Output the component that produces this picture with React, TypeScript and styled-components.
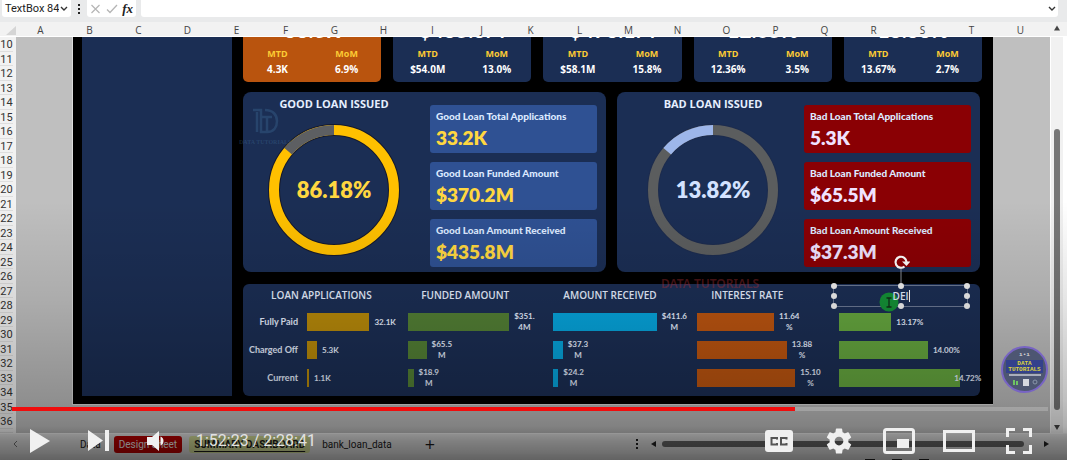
import React from "react";
import styled, { createGlobalStyle } from "styled-components";

const GlobalStyle = createGlobalStyle`
  * { box-sizing: border-box; }
  body { margin: 0; background: #fff; font-family: "Open Sans", "Noto Sans", sans-serif; }
  button { border: 0; padding: 0; background: none; font: inherit; color: inherit; cursor: pointer; }
  input { border: 0; padding: 0; background: none; font: inherit; color: inherit; outline: 0; min-width: 0; }
`;

const Page = styled.main`
  position: relative;
  display: flex;
  flex-direction: column;
  min-height: 100vh;
  overflow: hidden;
  background: #efefef;
`;

/* ---------- formula bar ---------- */

const FormulaBar = styled.header`
  display: flex;
  align-items: stretch;
  height: 22px;
  padding: 0 9px 5px 2px;
  background: #e9eaeb;
  color: #222;
  font-size: 11px;
`;

const NameBox = styled.label`
  display: flex;
  align-items: center;
  justify-content: space-between;
  width: 69px;
  padding: 0 3px;
  background: #fff;
  border-radius: 0 0 3px 3px;
  input { width: 54px; font: 400 11px/16px Roboto, sans-serif; }
`;

const Dots = styled.span`
  display: flex;
  align-items: center;
  justify-content: center;
  width: 16px;
`;

const FxGroup = styled.div`
  display: flex;
  align-items: center;
  justify-content: space-between;
  width: 49px;
  margin-right: 5px;
  padding: 0 3px;
  background: #fff;
  border-radius: 0 0 3px 3px;
  button { display: flex; }
`;

const FxButton = styled.button`
  && { font: italic bold 13px/16px "Liberation Serif", serif; }
`;

const FormulaField = styled.div`
  display: flex;
  flex: 1;
  align-items: center;
  padding-right: 2px;
  background: #fff;
  border-radius: 0 0 3px 3px;
  input { flex: 1; }
  button { display: flex; }
`;

/* ---------- sheet ---------- */

const ColumnHeads = styled.div`
  display: grid;
  grid-template-columns: 16px 1fr 22px;
  height: 15px;
  background: #f2f2f2;
  border-bottom: 1px solid #fff;
`;

const Corner = styled.svg`
  margin: 4px 0 0 6px;
`;

const Letters = styled.div`
  display: grid;
  grid-template-columns: repeat(21, 1fr);
  color: #444;
  font-size: 10px;
  line-height: 16px;
  text-align: center;
`;

const SheetBody = styled.div`
  display: flex;
  flex: 1;
`;

const RowHeads = styled.div`
  display: flex;
  flex-direction: column;
  width: 16px;
  padding-right: 3px;
  background: #f2f2f2;
  color: #333;
  font: 400 11px/15px Roboto, sans-serif;
  text-align: center;
`;

const RowHead = styled.div<{ $partial?: boolean }>`
  flex: ${(p) => (p.$partial ? 1 : 4)} 1 0;
  min-height: 0;
  overflow: hidden;
  border-bottom: 1px solid #dedede;
`;

const Cells = styled.div`
  flex: 1;
  min-width: 0;
  padding: 0 57px 28px 56px;
  background: #bfbfbf;
`;

const ScrollRail = styled.div`
  display: flex;
  flex-direction: column;
  align-items: center;
  justify-content: flex-end;
  width: 17px;
  padding: 0 0 3px;
  border-right: 4px solid #fff;
  border-left: 1px solid #fff;
  background: #f1f1f1;
`;

const ScrollThumb = styled.div`
  flex: 1;
  width: 6px;
  margin: 92px 0 14px;
  border-radius: 3px;
  background: #777;
`;

/* ---------- dashboard ---------- */

const Dashboard = styled.section`
  display: grid;
  grid-template-columns: 150px 1fr;
  gap: 11px;
  padding: 0 11px 8px 9px;
  border: solid #dcdcdc;
  border-width: 0 0 1px 1px;
  background: #000;
  color: #e6efff;
`;

const SidePanel = styled.aside`
  background: #1b2e54;
`;

const Content = styled.div`
  display: flex;
  flex-direction: column;
  gap: 11px;
  min-width: 0;
`;

const KpiRow = styled.div`
  display: grid;
  grid-template-columns: repeat(5, 1fr);
  gap: 12px;
`;

const KpiCard = styled.article<{ $active?: boolean }>`
  padding-bottom: 4px;
  border-radius: 0 0 5px 5px;
  background: ${(p) => (p.$active ? "#b9540e" : "#1b2e54")};
`;

const KpiTotal = styled.div`
  display: flex;
  align-items: flex-end;
  justify-content: center;
  height: 5px;
  overflow: hidden;
  font: bold 21px/25px Lato, sans-serif;
  color: #fff;
`;

const KpiPair = styled.dl`
  display: grid;
  grid-template-columns: 1fr 1fr;
  margin: 5px 0 0;
  text-align: center;
  dt { color: #fccb34; font-size: 9px; font-weight: 700; line-height: 14px; }
  dd { margin: 0; color: #fff; font-size: 10px; font-weight: 700; line-height: 17px; }
`;

const LoanRow = styled.div`
  display: grid;
  grid-template-columns: 1fr 1fr;
  gap: 11px;
  margin-top: -1px;
  padding-right: 2px;
`;

const LoanPanel = styled.article`
  position: relative;
  display: flex;
  justify-content: space-between;
  padding: 0 9px 5px 0;
  border-radius: 8px;
  background: #1b2e54;
`;

const LoanChart = styled.div<{ $left: number; $right: number }>`
  display: flex;
  flex: 1;
  flex-direction: column;
  align-items: center;
  padding: 3px ${(p) => p.$right}px 0 ${(p) => p.$left}px;
`;

const LoanTitle = styled.h2`
  margin: 0 0 12px;
  font: 700 11px/17px "Open Sans", sans-serif;
  white-space: nowrap;
`;

const Ring = styled.div`
  display: grid;
  place-items: center;
  svg, strong { grid-area: 1 / 1; }
`;

const RingValue = styled.strong<{ $color: string }>`
  color: ${(p) => p.$color};
  font: 800 22px/26px Lato, sans-serif;
`;

const Facts = styled.div`
  display: flex;
  flex-direction: column;
  gap: 9px;
  width: 167px;
  padding-top: 13px;
`;

const Fact = styled.div<{ $bad?: boolean }>`
  height: 48px;
  padding: 2px 6px;
  border-radius: 3px;
  background: ${(p) => (p.$bad ? "#8a0004" : "#2f5193")};
  color: ${(p) => (p.$bad ? "#f0e2ff" : "#ffd740")};
  font: 800 19px/25px Lato, sans-serif;
`;

const FactLabel = styled.div`
  color: #dce9ff;
  font: 900 10px/18px Lato, sans-serif;
  white-space: nowrap;
`;

const Breakdown = styled.article`
  position: relative;
  display: grid;
  grid-template-columns: 165fr 145fr 145fr 142fr 141fr;
  margin: 1px 2px 0 0;
  padding-bottom: 4px;
  border-radius: 6px;
  background: #1b2e54;
`;

const BarChart = styled.div<{ $labelled?: boolean }>`
  position: relative;
  min-width: 0;
  padding-left: ${(p) => (p.$labelled ? 64 : 0)}px;
`;

const BarTitle = styled.h3<{ $left: number; $right: number }>`
  height: 24px;
  margin: 0 ${(p) => p.$right}px 0 ${(p) => p.$left}px;
  font: 600 10px/23px "Open Sans", sans-serif;
  text-align: center;
  white-space: nowrap;
`;

const BarLine = styled.div`
  position: relative;
  display: flex;
  align-items: center;
  gap: 5px;
  height: 28px;
`;

const BarName = styled.span`
  position: absolute;
  right: 100%;
  padding-right: 9px;
  font: 700 9px/12px Lato, sans-serif;
  white-space: nowrap;
`;

const Bar = styled.span<{ $color: string }>`
  flex: none;
  height: 18px;
  background: ${(p) => p.$color};
`;

const BarValue = styled.span<{ $over?: boolean }>`
  margin-left: ${(p) => (p.$over ? -11 : 0)}px;
  font: 700 8px/11px Lato, sans-serif;
  text-align: center;
  white-space: pre;
`;

const TextBox = styled.div`
  position: absolute;
  top: 1px;
  right: 12px;
  left: -6px;
  height: 22px;
  border: 1px solid #6b7893;
`;

const TextBoxInput = styled.input`
  && {
    position: relative;
    display: block;
    width: 100%;
    height: 20px;
    font-size: 10px;
    font-weight: 600;
    text-align: center;
  }
`;

const Caret = styled.span`
  position: absolute;
  top: 4px;
  left: calc(50% + 8px);
  width: 1px;
  height: 12px;
  background: #fff;
`;

const Handle = styled.span<{ $x: number; $y: number }>`
  position: absolute;
  top: ${(p) => p.$y}%;
  left: ${(p) => p.$x}%;
  width: 6px;
  height: 6px;
  margin: -3px;
  border-radius: 50%;
  background: #f1f1f1;
`;

const RotateHandle = styled.svg`
  position: absolute;
  bottom: 100%;
  left: calc(50% - 9px);
`;

const Pointer = styled.svg`
  position: absolute;
  top: 6px;
  left: 45px;
`;

const RedMark = styled.span`
  position: absolute;
  top: -8px;
  left: 418px;
  color: rgba(190, 50, 60, 0.4);
  font: 600 12px/16px "Noto Sans", sans-serif;
`;

const FaintMark = styled.span`
  position: absolute;
  top: 14px;
  left: -4px;
  display: flex;
  flex-direction: column;
  align-items: center;
  color: rgba(70, 120, 165, 0.3);
  font: 700 6px/8px "Liberation Serif", serif;
  white-space: nowrap;
`;

const ChannelBadge = styled.div`
  position: absolute;
  top: 346px;
  right: 19px;
  display: flex;
  flex-direction: column;
  align-items: center;
  width: 47px;
  height: 47px;
  padding-top: 3px;
  border: 2px solid #7864c4;
  border-radius: 50%;
  background: #4d5672;
  color: #d5d5d5;
  font: 700 6px/7px "Liberation Mono", monospace;
  b { margin-top: 2px; padding: 1px 2px 0; background: #33418c; color: #dbd33c; text-align: center; font-size: 6px; line-height: 6px; }
  svg { margin-top: 1px; }
`;

/* ---------- sheet tabs ---------- */

const TabStrip = styled.nav`
  display: flex;
  align-items: center;
  height: 21px;
  padding: 0 17px 0 12px;
  background: #ececec;
  color: #1c1c1c;
  font: 400 10px/17px Roboto, sans-serif;
  border-top: 1px solid #f6f6f6;
`;

const Tab = styled.button<{ $kind?: "red" | "green" }>`
  height: 17px;
  padding: 0 5px;
  border-radius: 3px;
  white-space: nowrap;
  ${(p) => p.$kind === "red" && "&& { background: #c40000; color: #fff; margin-left: 8px; }"}
  ${(p) => p.$kind === "green" && "&& { background: #dfe9a0; font-weight: 700; text-decoration: underline; text-underline-offset: 3px; margin: 0 7px; }"}
`;

const TabArrow = styled.svg`
  width: 6px;
  margin-right: 57px;
`;

const AddTab = styled.button`
  && { margin: 0 auto 0 28px; font: 400 18px/18px "Open Sans", sans-serif; }
`;

const HScroll = styled.div`
  display: flex;
  align-items: center;
  gap: 5px;
  width: 40%;
  flex: none;
`;

const HThumb = styled.div`
  flex: 1;
  height: 6px;
  margin-right: 14px;
  border-radius: 3px;
  background: #6a6a6a;
`;

const StatusBar = styled.footer`
  display: flex;
  justify-content: flex-end;
  gap: 17px;
  height: 7px;
  padding: 5px 138px 0 0;
  overflow: hidden;
  background: #e8e8e8;
  i { width: 10px; height: 6px; border: 1px solid #222; border-width: 2px 1px; }
`;

/* ---------- video player ---------- */

const Shade = styled.div`
  position: absolute;
  inset: auto 0 0 0;
  height: 260px;
  background: linear-gradient(
    rgba(0, 0, 0, 0) 0,
    rgba(0, 0, 0, 0.1) 100px,
    rgba(0, 0, 0, 0.25) 200px,
    rgba(0, 0, 0, 0.32) 225px,
    rgba(0, 0, 0, 0.46) 240px,
    rgba(0, 0, 0, 0.58) 260px
  );
`;

const Player = styled.div`
  position: absolute;
  inset: auto 0 0 0;
`;

const Progress = styled.div`
  height: 4px;
  margin: 0 19px 0 12px;
  background: rgba(255, 255, 255, 0.2);
`;

const Played = styled.div`
  height: 4px;
  background: #f00d0d;
`;

const Controls = styled.div`
  display: flex;
  align-items: center;
  height: 50px;
  padding: 9px 18px 0 11px;
  color: #f0f0f0;
`;

const Control = styled.button<{ $w: number }>`
  display: flex;
  align-items: center;
  justify-content: center;
  width: ${(p) => p.$w}px;
  height: 30px;
`;

const Time = styled.span`
  flex: 1;
  padding-left: 11px;
  color: #e2e2e2;
  font: 400 16px/20px Roboto, sans-serif;
`;

const LETTERS = "ABCDEFGHIJKLMNOPQRSTU".split("");
const ROWS = Array.from({ length: 28 }, (_, i) => i + 10);

const KPIS = [
  ["38.6K", "4.3K", "6.9%"],
  ["$435.8M", "$54.0M", "13.0%"],
  ["$473.1M", "$58.1M", "15.8%"],
  ["12.05%", "12.36%", "3.5%"],
  ["13.33%", "13.67%", "2.7%"],
];

type Row = { pct: number; value: string; over?: boolean };
type Chart = { title?: string; left: number; right: number; color: string; rows: Row[] };

const STATUSES = ["Fully Paid", "Charged Off", "Current"];

const CHARTS: Chart[] = [
  {
    title: "LOAN APPLICATIONS", left: -64, right: 8, color: "#b88a0a",
    rows: [{ pct: 62, value: "32.1K" }, { pct: 10, value: "5.3K" }, { pct: 2, value: "1.1K" }],
  },
  {
    title: "FUNDED AMOUNT", left: 0, right: 30, color: "#538035",
    rows: [{ pct: 70, value: "$351.\n4M" }, { pct: 13, value: "$65.5\nM" }, { pct: 4, value: "$18.9\nM" }],
  },
  {
    title: "AMOUNT RECEIVED", left: 0, right: 30, color: "#06a5dd",
    rows: [{ pct: 72, value: "$411.6\nM" }, { pct: 7, value: "$37.3\nM" }, { pct: 4, value: "$24.2\nM" }],
  },
  {
    title: "INTEREST RATE", left: 0, right: 42, color: "#bd5510",
    rows: [{ pct: 54, value: "11.64\n%" }, { pct: 63, value: "13.88\n%" }, { pct: 69, value: "15.10\n%" }],
  },
  {
    left: 0, right: 0, color: "#66a83f",
    rows: [{ pct: 37, value: "13.17%" }, { pct: 63, value: "14.00%" }, { pct: 86, value: "14.72%", over: true }],
  },
];

const HANDLES = [[0, 0], [50, 0], [100, 0], [0, 50], [100, 50], [0, 100], [50, 100], [100, 100]];

function Donut({ share, minor, major, outline }: { share: number; minor: string; major: string; outline: string }) {
  return (
    <svg width="132" height="132" viewBox="0 0 132 132" fill="none">
      <circle cx="66" cy="66" r="60" stroke={outline} strokeWidth="12" />
      <g transform="rotate(-90 66 66)">
        <circle cx="66" cy="66" r="60" stroke={major} strokeWidth="10" />
        <circle
          cx="66" cy="66" r="60" stroke={minor} strokeWidth="10" pathLength="100"
          strokeDasharray={`${share} ${100 - share}`} strokeDashoffset={share}
        />
      </g>
    </svg>
  );
}

function ChevronDown() {
  return (
    <svg width="8" height="6" viewBox="0 0 8 6" fill="none" stroke="#333" strokeWidth="1.4">
      <path d="M1 1l3 3 3-3" />
    </svg>
  );
}

function Loan({ bad, title, share, facts }: { bad?: boolean; title: string; share: string; facts: string[][] }) {
  return (
    <LoanPanel>
      {!bad && (
        <FaintMark>
          <svg width="30" height="32" viewBox="0 0 30 32" fill="none" stroke="currentColor" strokeWidth="2.5">
            <path d="M3 4h8v22h6c7 0 10-5 10-11S23 4 15 4M7 6v20M12 11h10M17 11v14" />
          </svg>
          DATA TUTORIALS
        </FaintMark>
      )}
      <LoanChart $left={bad ? 5 : 0} $right={bad ? 0 : 5}>
        <LoanTitle>{title}</LoanTitle>
        <Ring>
          <Donut
            share={13.82}
            minor={bad ? "#9db6ea" : "#5d5f62"}
            major={bad ? "#5b5d5e" : "#ffc000"}
            outline={bad ? "#1d2c4e" : "#15192c"}
          />
          <RingValue $color={bad ? "#d3e2ff" : "#ffd740"}>{share}</RingValue>
        </Ring>
      </LoanChart>
      <Facts>
        {facts.map(([label, value]) => (
          <Fact key={label} $bad={bad}>
            <FactLabel>{label}</FactLabel>
            {value}
          </Fact>
        ))}
      </Facts>
    </LoanPanel>
  );
}

export default function App() {
  return (
    <Page>
      <GlobalStyle />
      <FormulaBar>
        <NameBox>
          <input aria-label="Name box" defaultValue="TextBox 84" />
          <ChevronDown />
        </NameBox>
        <Dots>
          <svg width="4" height="12" viewBox="0 0 4 12" fill="#222">
            <rect x="1" y="1" width="2" height="2" /><rect x="1" y="5" width="2" height="2" /><rect x="1" y="9" width="2" height="2" />
          </svg>
        </Dots>
        <FxGroup>
          <button aria-label="Cancel">
            <svg width="11" height="10" viewBox="0 0 11 10" stroke="#b5b5b5" strokeWidth="1.2"><path d="M1.500 1l8 8M9.500 1l-8 8" /></svg>
          </button>
          <button aria-label="Enter">
            <svg width="12" height="10" viewBox="0 0 12 10" fill="none" stroke="#b5b5b5" strokeWidth="1.300"><path d="M1 5.500l3 3L11 1" /></svg>
          </button>
          <FxButton>fx</FxButton>
        </FxGroup>
        <FormulaField>
          <input aria-label="Formula" />
          <button aria-label="Expand formula bar"><ChevronDown /></button>
        </FormulaField>
      </FormulaBar>

      <ColumnHeads>
        <Corner width="10" height="9" viewBox="0 0 10 9"><path d="M10 0v9H0z" fill="#d5d5d5" /></Corner>
        <Letters>{LETTERS.map((l) => <span key={l}>{l}</span>)}</Letters>
        <svg width="22" height="14" viewBox="0 0 22 14"><path d="M9 8.500L12 3.500l3 5z" fill="#444" /></svg>
      </ColumnHeads>

      <SheetBody>
        <RowHeads>
          {ROWS.map((r) => <RowHead key={r} $partial={r === 37}>{r}</RowHead>)}
        </RowHeads>
        <Cells>
          <Dashboard>
            <SidePanel />
            <Content>
              <KpiRow>
                {KPIS.map(([total, mtd, mom], i) => (
                  <KpiCard key={total} $active={i === 0}>
                    <KpiTotal>{total}</KpiTotal>
                    <KpiPair>
                      <dt>MTD</dt>
                      <dt>MoM</dt>
                      <dd>{mtd}</dd>
                      <dd>{mom}</dd>
                    </KpiPair>
                  </KpiCard>
                ))}
              </KpiRow>
              <LoanRow>
                <Loan
                  title="GOOD LOAN ISSUED"
                  share="86.18%"
                  facts={[
                    ["Good Loan Total Applications", "33.2K"],
                    ["Good Loan Funded Amount", "$370.2M"],
                    ["Good Loan Amount Received", "$435.8M"],
                  ]}
                />
                <Loan
                  bad
                  title="BAD LOAN ISSUED"
                  share="13.82%"
                  facts={[
                    ["Bad Loan Total Applications", "5.3K"],
                    ["Bad Loan Funded Amount", "$65.5M"],
                    ["Bad Loan Amount Received", "$37.3M"],
                  ]}
                />
              </LoanRow>
              <Breakdown>
                {CHARTS.map((c, ci) => (
                  <BarChart key={ci} $labelled={ci === 0}>
                    <BarTitle $left={c.left} $right={c.right}>{c.title}</BarTitle>
                    {c.rows.map((r, i) => (
                      <BarLine key={i}>
                        {ci === 0 && <BarName>{STATUSES[i]}</BarName>}
                        <Bar $color={c.color} style={{ width: `${r.pct}%` }} />
                        <BarValue $over={r.over}>{r.value}</BarValue>
                      </BarLine>
                    ))}
                    {!c.title && (
                      <TextBox>
                        <Pointer width="20" height="20" viewBox="0 0 20 20" fill="none">
                          <circle cx="10" cy="10" r="9.500" fill="#149237" />
                          <path d="M7.500 6h5M7.500 15h5M10 6v9" stroke="#10301a" strokeWidth="1.300" />
                        </Pointer>
                        <TextBoxInput aria-label="Chart title" defaultValue="DEI" />
                        <Caret />
                        <RotateHandle width="18" height="32" viewBox="0 0 18 32" fill="none">
                          <path d="M9 14v18" stroke="#8a8f99" />
                          <path d="M12.500 12.500A5.500 5.500 0 1 1 14.500 8" stroke="#fff" strokeWidth="2.200" />
                          <path d="M10 7.500h8.500l-4 4.500z" fill="#fff" />
                        </RotateHandle>
                        {HANDLES.map(([x, y]) => <Handle key={`${x}-${y}`} $x={x} $y={y} />)}
                      </TextBox>
                    )}
                  </BarChart>
                ))}
                <RedMark>DATA TUTORIALS</RedMark>
              </Breakdown>
            </Content>
          </Dashboard>
        </Cells>
        <ScrollRail>
          <ScrollThumb />
          <svg width="8" height="6" viewBox="0 0 8 6"><path d="M1 1h6L4 6z" fill="#444" /></svg>
        </ScrollRail>
      </SheetBody>

      <TabStrip>
        <TabArrow height="8" viewBox="0 0 6 8" fill="none" stroke="#777"><path d="M5 1L2 4l3 3" /></TabArrow>
        <Tab>Data</Tab>
        <Tab $kind="red">Design Sheet</Tab>
        <Tab $kind="green">SUMMARY DASHBOARD</Tab>
        <Tab>bank_loan_data</Tab>
        <AddTab aria-label="New sheet">+</AddTab>
        <HScroll>
          <svg width="22" height="10" viewBox="0 0 22 10" fill="#222">
            <rect x="1" y="0" width="2" height="2" /><rect x="1" y="4" width="2" height="2" /><rect x="1" y="8" width="2" height="2" />
            <path d="M21 2v6l-5-3z" />
          </svg>
          <HThumb />
          <svg width="7" height="8" viewBox="0 0 7 8" fill="#222"><path d="M1 1v6l5-3z" /></svg>
        </HScroll>
      </TabStrip>
      <StatusBar><i /><i /><i /></StatusBar>

      <Shade />
      <ChannelBadge>
        ı•ı
        <b>DATA<br />TUTORIALS</b>
        <svg width="32" height="12" viewBox="0 0 32 12">
          <path d="M0 1h32" stroke="#c9ccd6" strokeWidth="1.500" />
          <path d="M5 6v5M8 7v4" stroke="#6fc463" strokeWidth="2" />
          <rect x="14" y="5" width="6" height="7" fill="#d5d8e0" />
          <circle cx="26" cy="8" r="2" stroke="#8995aa" fill="none" />
        </svg>
      </ChannelBadge>

      <Player>
        <Progress><Played style={{ width: "75.6%" }} /></Progress>
        <Controls>
          <Control $w={58} aria-label="Play">
            <svg width="20" height="24" viewBox="0 0 20 24" fill="currentColor"><path d="M0 0l20 12L0 24z" /></svg>
          </Control>
          <Control $w={58} aria-label="Next">
            <svg width="21" height="21" viewBox="0 0 21 21" fill="currentColor"><path d="M0 0l15 10.500L0 21zM17 0h4v21h-4z" /></svg>
          </Control>
          <Control $w={58} aria-label="Mute">
            <svg width="18" height="20" viewBox="0 0 18 20" fill="currentColor">
              <path d="M0 6h5l7-6v20l-7-6H0zM13.500 5.500c4 1.500 4 7.500 0 9z" />
            </svg>
          </Control>
          <Time>1:52:23 / 2:28:41</Time>
          <Control $w={60} aria-label="Captions">
            <svg width="28" height="22" viewBox="0 0 28 22">
              <rect width="28" height="22" rx="3" fill="currentColor" />
              <path d="M12 9.500V8H6.500v6.500H12V13M21.500 9.500V8H16v6.500h5.500V13" stroke="#555" strokeWidth="2" fill="none" />
            </svg>
          </Control>
          <Control $w={60} aria-label="Settings">
            <svg width="30" height="30" viewBox="0 0 24 24" fill="currentColor">
              <path d="M19.430 12.980c.04-.32.07-.64.07-.98s-.03-.66-.07-.98l2.110-1.650c.19-.15.24-.42.12-.64l-2-3.460c-.12-.22-.39-.3-.61-.22l-2.490 1c-.52-.4-1.080-.73-1.690-.98l-.38-2.650C14.460 2.180 14.250 2 14 2h-4c-.25 0-.46.18-.49.42l-.38 2.650c-.61.25-1.170.59-1.690.98l-2.490-1c-.23-.09-.49 0-.61.22l-2 3.460c-.13.22-.07.49.12.64l2.110 1.650c-.04.32-.07.65-.07.98s.03.66.07.98l-2.110 1.650c-.19.15-.24.42-.12.64l2 3.460c.12.22.39.3.61.22l2.490-1c.52.4 1.080.73 1.690.98l.38 2.650c.03.24.24.42.49.42h4c.25 0 .46-.18.49-.42l.38-2.650c.61-.25 1.170-.59 1.690-.98l2.490 1c.23.09.49 0 .61-.22l2-3.460c.12-.22.07-.49-.12-.64l-2.110-1.650zM12 15.500c-1.930 0-3.500-1.570-3.500-3.500s1.570-3.500 3.500-3.500 3.500 1.570 3.500 3.500-1.570 3.500-3.500 3.500z" />
            </svg>
          </Control>
          <Control $w={60} aria-label="Miniplayer">
            <svg width="32" height="26" viewBox="0 0 32 26" fill="none">
              <rect x="1.500" y="1.500" width="29" height="23" rx="2" stroke="currentColor" strokeWidth="3" />
              <rect x="14" y="11" width="12" height="9" fill="currentColor" />
            </svg>
          </Control>
          <Control $w={60} aria-label="Theater mode">
            <svg width="32" height="22" viewBox="0 0 32 22" fill="none">
              <rect x="1.500" y="1.500" width="29" height="19" stroke="currentColor" strokeWidth="3" />
            </svg>
          </Control>
          <Control $w={60} aria-label="Full screen">
            <svg width="26" height="26" viewBox="0 0 26 26" fill="none" stroke="currentColor" strokeWidth="3">
              <path d="M1.500 9V1.500H9M17 1.500h7.500V9M24.500 17v7.500H17M9 24.500H1.500V17" />
            </svg>
          </Control>
        </Controls>
      </Player>
    </Page>
  );
}
